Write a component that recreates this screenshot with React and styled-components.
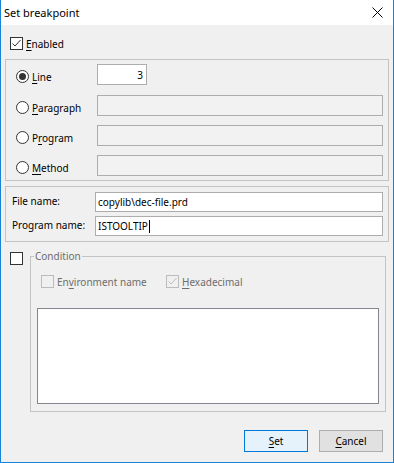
import React from 'react';
import styled, { createGlobalStyle } from 'styled-components';

const Global = createGlobalStyle`
  html, body { margin: 0; padding: 0; background: #ffffff; }
  body {
    font-family: "Noto Sans", "Open Sans", sans-serif;
    font-size: 10px;
    color: #000;
  }
  * { box-sizing: border-box; }
`;

const Window = styled.div`
  width: 394px;
  height: 463px;
  display: flex;
  flex-direction: column;
  background: #f0f0f0;
  border: 1px solid #1883d7;
  border-top: none;
`;

const TitleBar = styled.div`
  height: 25px;
  flex: none;
  background: #ffffff;
  display: flex;
  align-items: center;
  justify-content: space-between;
`;

const Title = styled.div`
  padding-left: 3px;
  font-size: 11px;
  line-height: 16px;
`;

const CloseButton = styled.div`
  width: 30px;
  height: 25px;
  margin-right: 1px;
  display: flex;
  align-items: center;
  justify-content: center;
`;

const Body = styled.div`
  flex: 1;
  display: flex;
  flex-direction: column;
  padding: 10px 4px 10px 4px;
`;

const CheckRow = styled.div`
  height: 17px;
  display: flex;
  align-items: center;
  padding-left: ${(p) => p.$indent || 0}px;
`;

const CheckItem = styled.label`
  display: flex;
  align-items: center;
  gap: 3px;
  width: ${(p) => (p.$width ? `${p.$width}px` : 'auto')};
  color: ${(p) => (p.$disabled ? '#6d6d6d' : '#000')};
  line-height: 16px;
`;

const Box = styled.span`
  width: 13px;
  height: 13px;
  flex: none;
  border: 1px solid ${(p) => (p.$disabled ? '#bcbcbc' : '#333333')};
  background: ${(p) => (p.$disabled ? '#f0f0f0' : '#ffffff')};
  display: flex;
  align-items: center;
  justify-content: center;
  margin-top: ${(p) => p.$top || 0}px;
`;

const Key = styled.span`
  text-decoration: underline;
  text-underline-offset: 2px;
`;

const GroupBox = styled.div`
  border: 1px solid #c3c3c3;
  margin-top: ${(p) => p.$top || 0}px;
  display: flex;
  flex-direction: column;
`;

const RadioGroup = styled(GroupBox)`
  padding: 4px 5px 4px 10px;
  gap: 9px;
`;

const OptionRow = styled.div`
  height: 21px;
  display: flex;
  align-items: center;
  margin-bottom: ${(p) => (p.$extra ? 1 : 0)}px;
`;

const OptionLabel = styled.label`
  width: 81px;
  flex: none;
  display: flex;
  align-items: center;
  gap: 3px;
  padding-top: 4px;
  line-height: 16px;
`;

const Radio = styled.span`
  width: 13px;
  height: 13px;
  flex: none;
  border-radius: 50%;
  border: 1px solid #333333;
  background: #ffffff;
  display: flex;
  align-items: center;
  justify-content: center;
`;

const Dot = styled.span`
  width: 7px;
  height: 7px;
  border-radius: 50%;
  background: #333333;
`;

const Field = styled.div`
  height: ${(p) => p.$h || 21}px;
  width: ${(p) => (p.$w ? `${p.$w}px` : 'auto')};
  flex: ${(p) => (p.$w ? 'none' : '1')};
  border: 1px solid #adadad;
  background: ${(p) => (p.$disabled ? '#f2f2f2' : '#ffffff')};
  display: flex;
  align-items: center;
  justify-content: ${(p) => (p.$right ? 'flex-end' : 'flex-start')};
  padding: 0 3px 0 2px;
  white-space: nowrap;
  line-height: 16px;
`;

const Caret = styled.span`
  width: 1px;
  height: 13px;
  background: #000;
  margin-left: 1px;
`;

const NameGroup = styled(GroupBox)`
  padding: 5px 5px 5px 6px;
  gap: 4px;
`;

const NameRow = styled.div`
  height: 20px;
  display: flex;
  align-items: center;
`;

const NameLabel = styled.div`
  width: 83px;
  flex: none;
  padding-bottom: 3px;
  line-height: 16px;
  white-space: nowrap;
`;

const ConditionRow = styled.div`
  display: flex;
  align-items: flex-start;
  gap: 7px;
  margin-top: 7px;
  padding: 0 3px 0 5px;
`;

const Fieldset = styled.fieldset`
  flex: 1;
  margin: 0;
  padding: 0;
  min-width: 0;
  border: 1px solid #c3c3c3;
`;

const Legend = styled.legend`
  margin-left: 3px;
  padding: 0 1px;
  line-height: 14px;
  color: #6d6d6d;
`;

const ConditionBody = styled.div`
  display: flex;
  flex-direction: column;
  padding: 10px 6px 7px 6px;
`;

const TextArea = styled.div`
  margin-top: 18px;
  height: 96px;
  border: 1px solid #828790;
  background: #ffffff;
`;

const ButtonRow = styled.div`
  margin-top: 18px;
  display: flex;
  justify-content: flex-end;
  gap: 11px;
  padding-right: 6px;
`;

const Button = styled.div`
  width: 64px;
  height: 22px;
  display: flex;
  align-items: center;
  justify-content: center;
  border: 1px solid ${(p) => (p.$default ? '#0078d7' : '#adadad')};
  background: ${(p) => (p.$default ? '#e5f1fb' : '#e1e1e1')};
  line-height: 16px;
`;

const Check = ({ color }) => (
  <svg width="11" height="11" viewBox="0 0 11 11">
    <polyline points="1.5,5.5 4,8 9.5,2" fill="none" stroke={color} strokeWidth="1" />
  </svg>
);

const CheckBox = ({ checked, disabled, top }) => (
  <Box $disabled={disabled} $top={top}>
    {checked && <Check color={disabled ? '#bcbcbc' : '#333333'} />}
  </Box>
);

const options = [
  { key: 'L', rest: 'ine', pre: '', checked: true, value: '3', w: 50 },
  { key: 'P', rest: 'aragraph', pre: '' },
  { key: 'r', rest: 'ogram', pre: 'P' },
  { key: 'M', rest: 'ethod', pre: '' },
];

export default function App() {
  return (
    <>
      <Global />
      <Window>
        <TitleBar>
          <Title>Set breakpoint</Title>
          <CloseButton>
            <svg width="11" height="11" viewBox="0 0 11 11">
              <path d="M0.5 0.5 L10.5 10.5 M10.5 0.5 L0.5 10.5" stroke="#000" strokeWidth="1" />
            </svg>
          </CloseButton>
        </TitleBar>
        <Body>
          <CheckRow $indent={5}>
            <CheckItem>
              <CheckBox checked />
              <span>
                <Key>E</Key>nabled
              </span>
            </CheckItem>
          </CheckRow>

          <RadioGroup $top={7}>
            {options.map((o, i) => (
              <OptionRow key={i} $extra={i === 0}>
                <OptionLabel>
                  <Radio>{o.checked && <Dot />}</Radio>
                  <span>
                    {o.pre}
                    <Key>{o.key}</Key>
                    {o.rest}
                  </span>
                </OptionLabel>
                {o.checked ? (
                  <Field $w={o.w} $right>
                    {o.value}
                  </Field>
                ) : (
                  <Field $disabled />
                )}
              </OptionRow>
            ))}
          </RadioGroup>

          <NameGroup $top={5}>
            <NameRow>
              <NameLabel>File name:</NameLabel>
              <Field $h={20}>copylib\dec-file.prd</Field>
            </NameRow>
            <NameRow>
              <NameLabel>Program name:</NameLabel>
              <Field $h={20}>
                ISTOOLTIP
                <Caret />
              </Field>
            </NameRow>
          </NameGroup>

          <ConditionRow>
            <CheckBox top={3} />
            <Fieldset>
              <Legend>Condition</Legend>
              <ConditionBody>
                <CheckRow $indent={4}>
                  <CheckItem $width={125} $disabled>
                    <CheckBox disabled />
                    <span>
                      En<Key>v</Key>ironment name
                    </span>
                  </CheckItem>
                  <CheckItem $disabled>
                    <CheckBox checked disabled />
                    <span>
                      <Key>H</Key>exadecimal
                    </span>
                  </CheckItem>
                </CheckRow>
                <TextArea />
              </ConditionBody>
            </Fieldset>
          </ConditionRow>

          <ButtonRow>
            <Button $default>
              <span>
                <Key>S</Key>et
              </span>
            </Button>
            <Button>
              <span>
                <Key>C</Key>ancel
              </span>
            </Button>
          </ButtonRow>
        </Body>
      </Window>
    </>
  );
}
